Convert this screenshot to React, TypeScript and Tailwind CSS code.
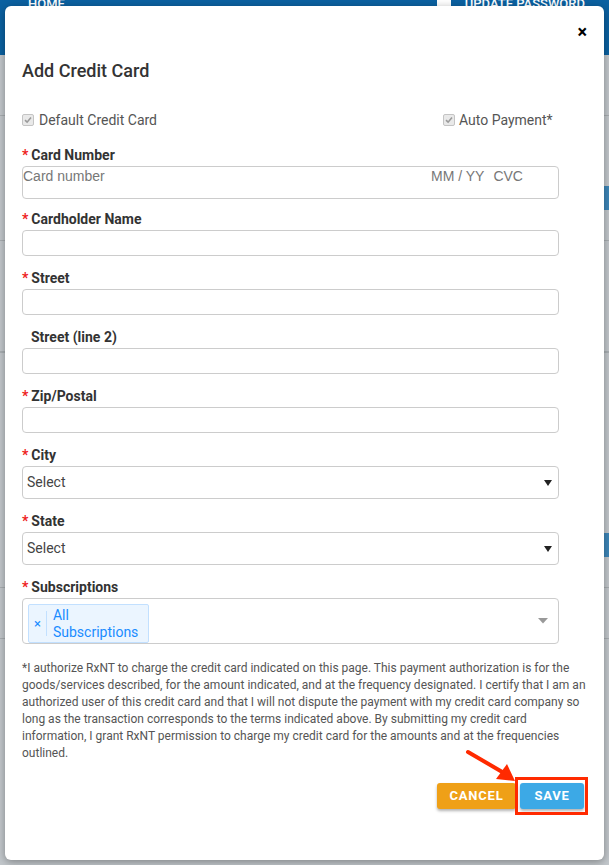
import React from "react";

const Check = () => (
  <span className="flex h-[12px] w-[12px] items-center justify-center rounded-[2px] border border-[#c4c4c4] bg-[#e9e9e9]">
    <svg width="8" height="8" viewBox="0 0 8 8">
      <path d="M1 4.2 L3.1 6.2 L7 1.6" fill="none" stroke="#9a9a9a" strokeWidth="1.6" />
    </svg>
  </span>
);

const Label = ({ text, required = true }: { text: string; required?: boolean }) => (
  <div className="flex h-[20px] items-center text-[14px] leading-[20px] font-bold text-[#333]">
    {required ? <span className="mr-[3px] text-[#ee1c1c]">*</span> : <span className="w-[9px]" />}
    {text}
  </div>
);

const TextInput = () => <div className="mt-px h-[26px] w-[537px] rounded-[4px] border border-[#cccccc] bg-white" />;

const Select = () => (
  <div className="mt-px flex h-[33px] w-[537px] items-center justify-between rounded-[4px] border border-[#cccccc] bg-white pr-[6px] pl-[4px]">
    <span className="text-[14px] text-[#444]">Select</span>
    <svg width="8" height="6" viewBox="0 0 8 6">
      <path d="M0 0 H8 L4 6 Z" fill="#222" />
    </svg>
  </div>
);

export default function App() {
  return (
    <div className="relative min-h-[865px] overflow-hidden bg-[#c3c8cc] font-['Roboto',sans-serif]">
      {/* page behind the dialog */}
      <div className="flex h-[55px] items-start justify-between bg-[#0b61a1] pr-[24px] pl-[28px] text-[13px] font-medium text-white">
        <span className="-mt-[6px]">HOME</span>
        <span className="-mt-[6px] flex items-center gap-[14px]">
          <span className="h-[14px] w-[14px] bg-white" />
          UPDATE PASSWORD
        </span>
      </div>
      <div className="flex flex-col">
        <div className="mt-[60px] h-px bg-[#a9aeb2]" />
        <div className="mt-[70px] ml-auto h-[24px] w-[40px] bg-[#3d86b8]" />
        <div className="mt-[30px] h-px bg-[#a9aeb2]" />
        <div className="mt-[110px] h-[2px] bg-[#aab0b4]" />
        <div className="mt-[180px] ml-auto h-[24px] w-[40px] bg-[#3d86b8]" />
        <div className="mt-[30px] h-px bg-[#a9aeb2]" />
        <div className="mt-[50px] h-px bg-[#a9aeb2]" />
        <div className="mt-[240px] h-px bg-[#97a0a8]" />
      </div>

      {/* dialog */}
      <div className="absolute top-[6px] left-[5px] h-[854px] w-[599px] rounded-[6px] bg-white shadow-[0_2px_8px_rgba(0,0,0,0.35)]">
        <div className="flex justify-end pt-[19px] pr-[17px]">
          <span className="text-[18px] leading-[14px] font-bold text-black">×</span>
        </div>

        <div className="px-[17px]">
          <h2 className="mt-[20px] text-[18px] leading-[24px] font-medium text-[#333]">Add Credit Card</h2>

          <div className="mt-[27px] grid grid-cols-[421px_1fr] text-[14px] leading-[20px] text-[#555]">
            <label className="flex items-center gap-[5px]">
              <Check />
              Default Credit Card
            </label>
            <label className="flex items-center gap-[4px]">
              <Check />
              Auto Payment*
            </label>
          </div>

          <div className="mt-[15px]">
            <Label text="Card Number" />
            <div className="mt-px flex h-[33px] w-[537px] items-start rounded-[4px] border border-[#cccccc] pt-px font-['Liberation_Sans',sans-serif] text-[14px] leading-[16px] text-[#777]">
              <span className="w-[408px]">Card number</span>
              <span>MM / YY</span>
              <span className="ml-[9px]">CVC</span>
            </div>
          </div>

          <div className="mt-[10px]">
            <Label text="Cardholder Name" />
            <TextInput />
          </div>
          <div className="mt-[12px]">
            <Label text="Street" />
            <TextInput />
          </div>
          <div className="mt-[12px]">
            <Label text="Street (line 2)" required={false} />
            <TextInput />
          </div>
          <div className="mt-[12px]">
            <Label text="Zip/Postal" />
            <TextInput />
          </div>
          <div className="mt-[12px]">
            <Label text="City" />
            <Select />
          </div>
          <div className="mt-[12px]">
            <Label text="State" />
            <Select />
          </div>
          <div className="mt-[12px]">
            <Label text="Subscriptions" />
            <div className="mt-px flex h-[46px] w-[537px] items-start justify-between rounded-[4px] border border-[#cccccc] pr-[10px] pl-[5px]">
              <div className="mt-[5px] flex h-[39px] w-[121px] items-stretch rounded-[2px] border border-[#c2e0ff] bg-[#ebf5ff] text-[14px] leading-[17px] text-[#1a8cff]">
                <span className="my-[6px] flex items-center border-r border-[#c2e0ff] px-[5px] text-[13px]">×</span>
                <span className="px-[6px] py-[2px]">
                  All
                  <br />
                  Subscriptions
                </span>
              </div>
              <svg className="mt-[19px]" width="10" height="6" viewBox="0 0 10 6">
                <path d="M0 0 H10 L5 5.5 Z" fill="#999" />
              </svg>
            </div>
          </div>

          <p className="mt-[16px] w-[566px] text-[12px] leading-[17px] text-[#555]">
            *I authorize RxNT to charge the credit card indicated on this page. This payment authorization is for the goods/services described, for the amount indicated, and at the frequency designated. I certify that I am an authorized user of this credit card and that I will not dispute the payment with my credit card company so long as the transaction corresponds to the terms indicated above. By submitting my credit card information, I grant RxNT permission to charge my credit card for the amounts and at the frequencies outlined.
          </p>

          <div className="mt-[21px] flex justify-end gap-[4px] pr-[3px]">
            <button className="h-[26px] w-[79px] rounded-[3px] bg-[#efa017] text-[13px] font-bold tracking-[0.8px] text-white shadow-[0_2px_3px_rgba(0,0,0,0.3)]">
              CANCEL
            </button>
            <div className="relative">
              <button className="h-[26px] w-[64px] rounded-[3px] bg-[#3ca9e6] text-[13px] font-bold tracking-[0.8px] text-white shadow-[0_2px_3px_rgba(0,0,0,0.3)]">
                SAVE
              </button>
              <div className="absolute -top-[6px] -right-[4px] -bottom-[6px] -left-[5px] border-[3px] border-[#ff2a00]" />
            </div>
          </div>
        </div>

        {/* annotation arrow */}
        <svg className="absolute top-[740px] left-[455px]" width="65" height="45" viewBox="0 0 65 45">
          <line x1="8" y1="6" x2="44" y2="27" stroke="#ff2a00" strokeWidth="4" strokeLinecap="round" />
          <path d="M55 35 L36 33 L47 18 Z" fill="#ff2a00" />
        </svg>
      </div>
    </div>
  );
}
